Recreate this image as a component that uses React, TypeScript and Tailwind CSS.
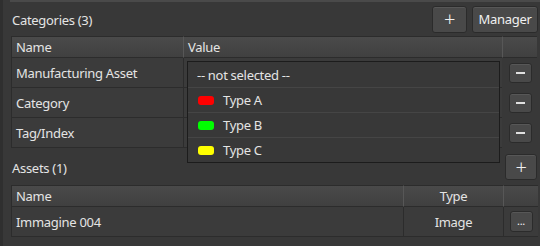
import React from "react"

const font = { fontFamily: '"Noto Sans", "Open Sans", sans-serif' }

function Btn({ children, className = "" }: { children: React.ReactNode; className?: string }) {
    return (
        <div className={"flex items-center justify-center rounded-[3px] border border-[#2b2b2b] bg-[#494949] text-[#f0f0f0] shadow-[inset_0_1px_0_#575757] " + className}>
            {children}
        </div>
    )
}

function Minus() {
    return (
        <Btn className="w-[23px] h-[20px]">
            <div className="w-[9px] h-[2px] bg-[#e0e0e0]" />
        </Btn>
    )
}

const options = [
    { label: "Type A", color: "bg-[#ff0000]" },
    { label: "Type B", color: "bg-[#00ff00]" },
    { label: "Type C", color: "bg-[#ffff00]" },
]

const head = "h-[22px] border-t border-b border-[#2c2c2c] bg-gradient-to-b from-[#4a4a4a] to-[#404040] flex items-center pt-[2px]"

export default function App() {
    const catRows = ["Manufacturing Asset", "Category", "Tag/Index"]

    return (
        <div style={font} className="w-[540px] h-[246px] bg-[#383838] flex text-[13px] tracking-[-0.3px] text-[#e4e4e4] overflow-hidden">
            <div className="w-[3px] h-full bg-[#2f2f2f]" />
            <div className="flex-1 flex flex-col pl-[8px] pr-[2px] relative">
                <div className="h-[2px] bg-[#4a4a4a] -ml-[1px] -mr-[2px]" />

                {/* categories header */}
                <div className="h-[34px] flex items-center">
                    <div className="flex-1 pl-[1px] pt-[3px]">Categories (3)</div>
                    <Btn className="w-[35px] h-[27px] text-[20px] font-light leading-none">+</Btn>
                    <Btn className="ml-[5px] w-[66px] h-[27px] pt-[2px]">Manager</Btn>
                </div>

                {/* categories table */}
                <div className="relative">
                    <div className="grid grid-cols-[172px_319px_35px]">
                        <div className={head + " border-l pl-[4px]"}>Name</div>
                        <div className={head + " border-l border-l-[#575757] pl-[4px]"}>Value</div>
                        <div className={head + " border-l border-l-[#575757]"} />
                        {catRows.map((r) => (
                            <React.Fragment key={r}>
                                <div className="h-[30px] border-l border-b border-[#2c2c2c] bg-[#3b3b3b] pl-[4px] pt-[3px] flex items-center">{r}</div>
                                <div className="h-[30px] border-l border-b border-[#2c2c2c] bg-[#3b3b3b]" />
                                <div className="h-[30px] flex items-center justify-center pl-[2px]">
                                    <Minus />
                                </div>
                            </React.Fragment>
                        ))}
                    </div>

                    {/* open dropdown */}
                    <div className="absolute left-[176px] top-[25px] w-[313px] h-[102px] bg-[#383838] border border-[#1c1c1c] flex flex-col">
                        <div className="h-[26px] border-b border-[#454545] flex items-center pl-[9px] pt-[2px]">-- not selected --</div>
                        {options.map((o, i) => (
                            <div key={o.label} className={"flex items-center pl-[10px] " + (i < 2 ? "h-[25px] border-b border-[#454545]" : "h-[24px]")}>
                                <div className={"w-[16px] h-[9px] rounded-[3px] " + o.color} />
                                <span className="ml-[9px] pt-[2px]">{o.label}</span>
                            </div>
                        ))}
                    </div>
                </div>

                {/* assets header */}
                <div className="h-[37px] flex items-center">
                    <div className="flex-1 pl-[1px] pt-[5px]">Assets (1)</div>
                    <Btn className="w-[32px] h-[26px] text-[20px] font-light leading-none mr-[1px]">+</Btn>
                </div>

                {/* assets table */}
                <div className="grid grid-cols-[392px_100px_35px]">
                    <div className={head + " border-l pl-[4px]"}>Name</div>
                    <div className={head + " border-l border-l-[#575757] justify-center"}>Type</div>
                    <div className={head + " border-l border-l-[#575757]"} />
                    <div className="h-[30px] border-l border-b border-[#2c2c2c] bg-[#3b3b3b] pl-[4px] pt-[3px] flex items-center">Immagine 004</div>
                    <div className="h-[30px] border-l border-b border-[#2c2c2c] bg-[#3b3b3b] pt-[3px] flex items-center justify-center">Image</div>
                    <div className="h-[30px] border-l border-b border-[#2c2c2c] bg-[#3b3b3b] flex items-center justify-center">
                        <Btn className="w-[23px] h-[21px] text-[11px] leading-none pb-[3px]">...</Btn>
                    </div>
                </div>
            </div>
        </div>
    )
}
